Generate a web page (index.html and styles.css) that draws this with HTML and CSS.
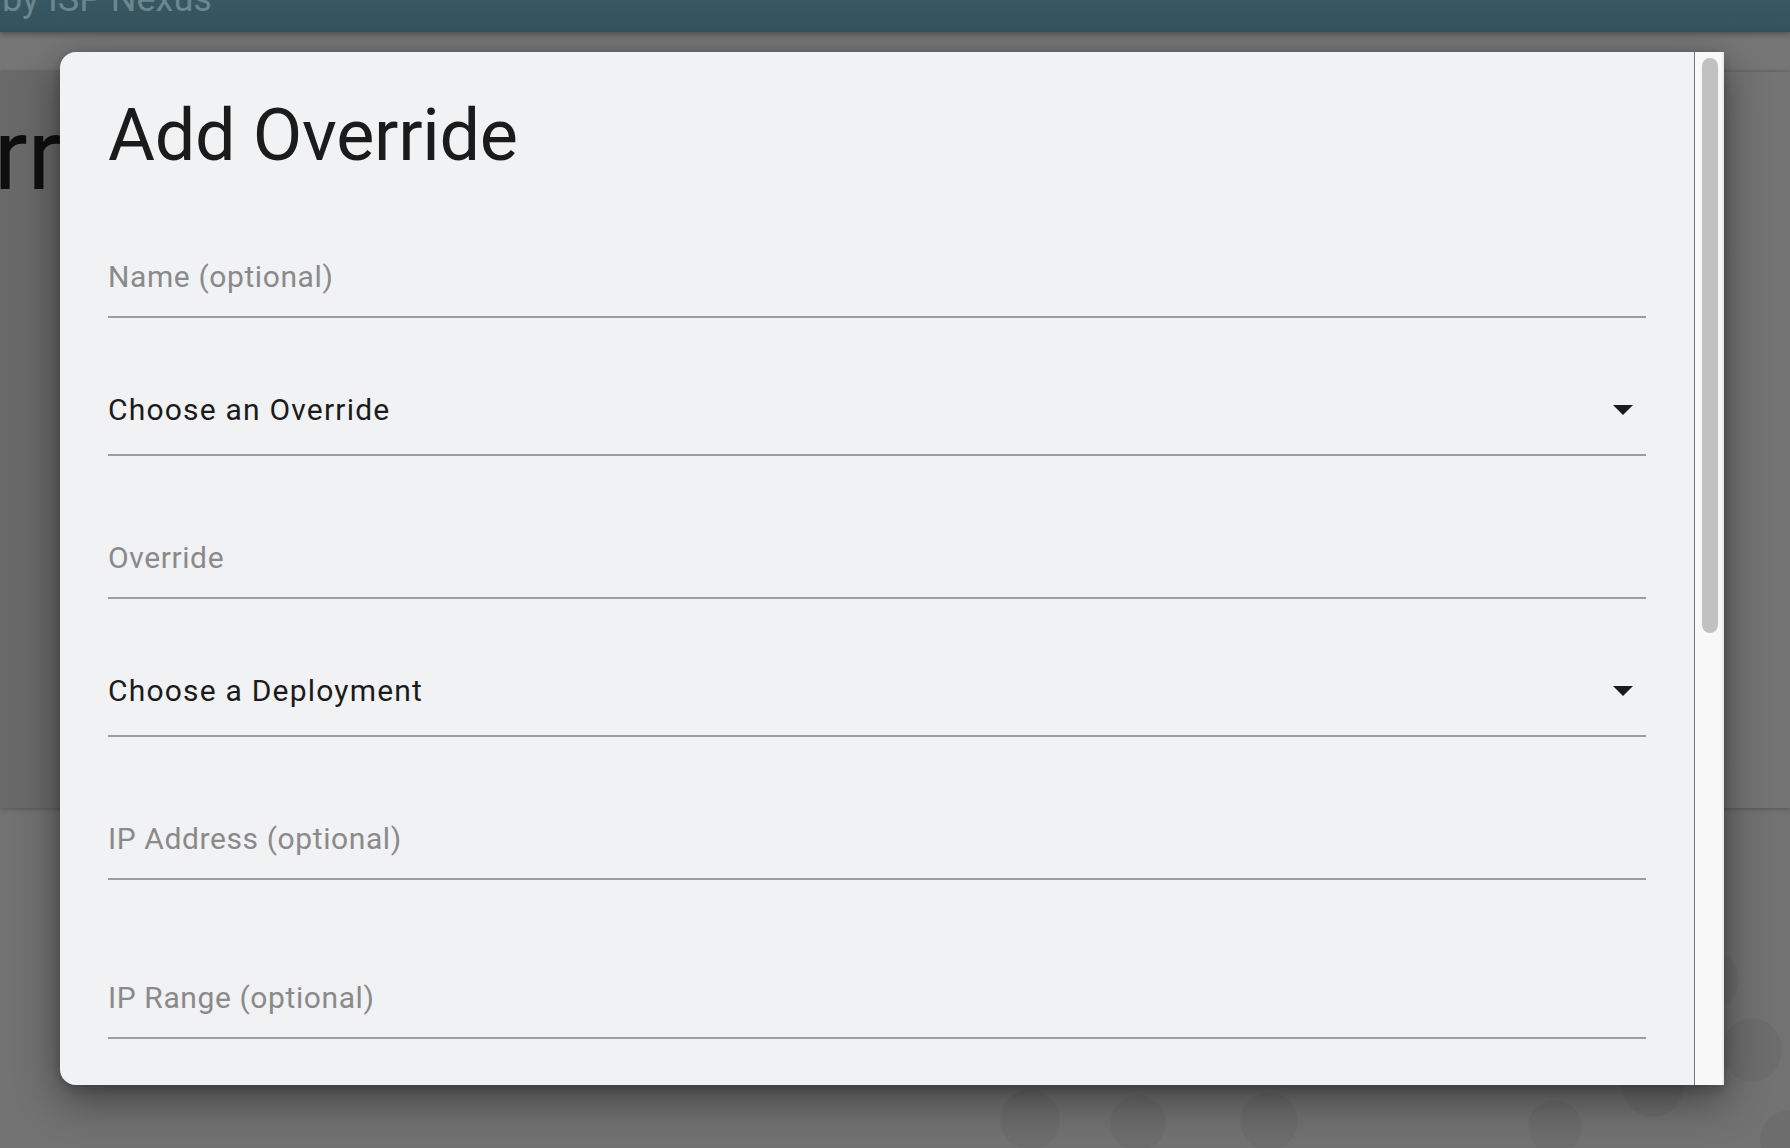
FILE: index.html
```html
<!DOCTYPE html>
<html lang="en">
<head>
<meta charset="utf-8">
<title>Add Override</title>
<link rel="stylesheet" href="styles.css">
</head>
<body>
  <div class="page">
    <header class="topbar"><span class="brand">by ISP Nexus</span></header>
    <div class="subbar"></div>
    <main class="card">
      <h1 class="page-title">Overrides</h1>
    </main>
    <div class="pattern">
      <span class="dot dot-1"></span>
      <span class="dot dot-2"></span>
      <span class="dot dot-3"></span>
      <span class="dot dot-4"></span>
      <span class="dot dot-5"></span>
      <span class="dot dot-6"></span>
      <span class="dot dot-7"></span>
      <span class="dot dot-8"></span>
    </div>
  </div>

  <div class="dialog" role="dialog">
    <div class="dialog-body">
      <h2 class="dialog-title">Add Override</h2>
      <div class="field field-first"><span class="placeholder">Name (optional)</span></div>
      <div class="field field-select"><span class="value">Choose an Override</span><span class="caret"></span></div>
      <div class="field"><span class="placeholder">Override</span></div>
      <div class="field field-select"><span class="value">Choose a Deployment</span><span class="caret"></span></div>
      <div class="field"><span class="placeholder">IP Address (optional)</span></div>
      <div class="field field-last"><span class="placeholder">IP Range (optional)</span></div>
    </div>
    <div class="scrollbar"><div class="thumb"></div></div>
  </div>
</body>
</html>
```

FILE: styles.css
```css
html, body {
  margin: 0;
  height: 100%;
  overflow: hidden;
}

body {
  background: #727272;
  font-family: Roboto, "Noto Sans", "Liberation Sans", sans-serif;
}

.page {
  position: relative;
  height: 100%;
}

.topbar {
  position: relative;
  z-index: 2;
  height: 32px;
  overflow: hidden;
  background: linear-gradient(180deg, #365862 0%, #33535c 100%);
  box-shadow: 0 2px 6px rgba(0, 0, 0, 0.35);
}

.brand {
  display: block;
  margin: -19px 0 0 2px;
  font-size: 36px;
  line-height: 36px;
  color: #6d868d;
  white-space: nowrap;
}

.subbar {
  height: 40px;
  background: #767676;
}

.card {
  position: relative;
  z-index: 1;
  height: 736px;
  overflow: hidden;
  background: linear-gradient(90deg, #696969 0%, #6d6d6d 60%, #747474 100%);
  box-shadow: 0 -1px 4px rgba(0, 0, 0, 0.18), 0 2px 4px rgba(0, 0, 0, 0.15);
}

.page-title {
  margin: 0 0 0 -176px;
  padding-top: 33px;
  font-size: 100px;
  line-height: 100px;
  font-weight: 400;
  color: #0e0e0e;
  white-space: nowrap;
}

.pattern {
  position: absolute;
  inset: 0;
  pointer-events: none;
}

.dot {
  position: absolute;
  border-radius: 50%;
  background: rgba(0, 0, 0, 0.035);
}

.dot-1 { left: 1722px; top: 1018px; width: 60px; height: 64px; }
.dot-2 { left: 1622px; top: 1055px; width: 62px; height: 62px; }
.dot-3 { left: 1528px; top: 1100px; width: 54px; height: 54px; }
.dot-4 { left: 1693px; top: 952px; width: 46px; height: 56px; }
.dot-5 { left: 1000px; top: 1090px; width: 60px; height: 60px; }
.dot-6 { left: 1110px; top: 1095px; width: 56px; height: 56px; }
.dot-7 { left: 1240px; top: 1092px; width: 58px; height: 58px; }
.dot-8 { left: 1760px; top: 1110px; width: 60px; height: 60px; }

.dialog {
  position: fixed;
  z-index: 10;
  left: 60px;
  top: 52px;
  width: 1664px;
  height: 1033px;
  display: flex;
  overflow: hidden;
  border-radius: 16px 0 0 16px;
  box-shadow: 0 14px 44px rgba(0, 0, 0, 0.45), 0 4px 12px rgba(0, 0, 0, 0.2);
}

.dialog-body {
  flex: 1;
  min-width: 0;
  padding: 41px 48px 0 48px;
  background: #f1f2f4;
}

.dialog-title {
  margin: 0;
  font-size: 72px;
  line-height: 86px;
  font-weight: 400;
  color: #1b1b1b;
  letter-spacing: -0.3px;
}

.field {
  display: flex;
  align-items: center;
  justify-content: space-between;
  margin-top: 84px;
  padding-bottom: 21px;
  border-bottom: 2px solid #9d9d9d;
  font-size: 30px;
  line-height: 36px;
  letter-spacing: 0.6px;
}

.field-first {
  margin-top: 80px;
}

.field-select {
  margin-top: 74px;
  padding-bottom: 26px;
  letter-spacing: 1.2px;
}

.field-last {
  margin-top: 100px;
}

.placeholder {
  color: #8a8a8a;
}

.value {
  color: #1b1b1b;
}

.caret {
  width: 0;
  height: 0;
  margin-right: 13px;
  border-left: 10px solid transparent;
  border-right: 10px solid transparent;
  border-top: 10px solid #1b1b1b;
}

.scrollbar {
  width: 30px;
  flex: none;
  box-sizing: border-box;
  border-left: 1px solid #7a7a7a;
  padding: 6px 6px 0 7px;
  background: #f8f8f8;
  box-shadow: inset -2px 0 0 #ececec;
}

.thumb {
  width: 16px;
  height: 575px;
  border-radius: 8px;
  background: #c1c1c1;
}
```
